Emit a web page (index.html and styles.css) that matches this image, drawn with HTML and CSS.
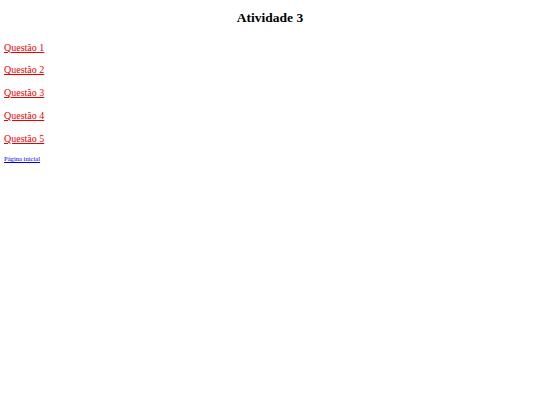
FILE: index.html
```html
<!DOCTYPE html>
<html lang="pt">
<head>
<meta charset="utf-8">
<title>Atividade 3</title>
<link rel="stylesheet" href="styles.css">
</head>
<body>
<h1 class="title">Atividade 3</h1>
<p class="item"><a class="q" href="#">Questão 1</a></p>
<p class="item"><a class="q" href="#">Questão 2</a></p>
<p class="item"><a class="q" href="#">Questão 3</a></p>
<p class="item"><a class="q" href="#">Questão 4</a></p>
<p class="item"><a class="q" href="#">Questão 5</a></p>
<p class="home"><a class="back" href="#">Página inicial</a></p>
</body>
</html>
```
FILE: styles.css
```css
html, body {
  background: #ffffff;
}
body {
  margin: 4px;
  font-family: "Liberation Serif", "Times New Roman", serif;
  color: #000000;
}
.title {
  font-size: 13.5px;
  font-weight: bold;
  text-align: center;
  margin: 5.5px 0 16.5px;
  line-height: 15.5px;
}
.item {
  font-size: 10px;
  line-height: 11.5px;
  margin: 0 0 11.3px;
}
.q {
  color: #ee0000;
  text-decoration: underline;
}
.home {
  font-size: 6.6px;
  line-height: 8px;
  margin: 0;
}
.back {
  color: #0000ee;
  text-decoration: underline;
}
```
